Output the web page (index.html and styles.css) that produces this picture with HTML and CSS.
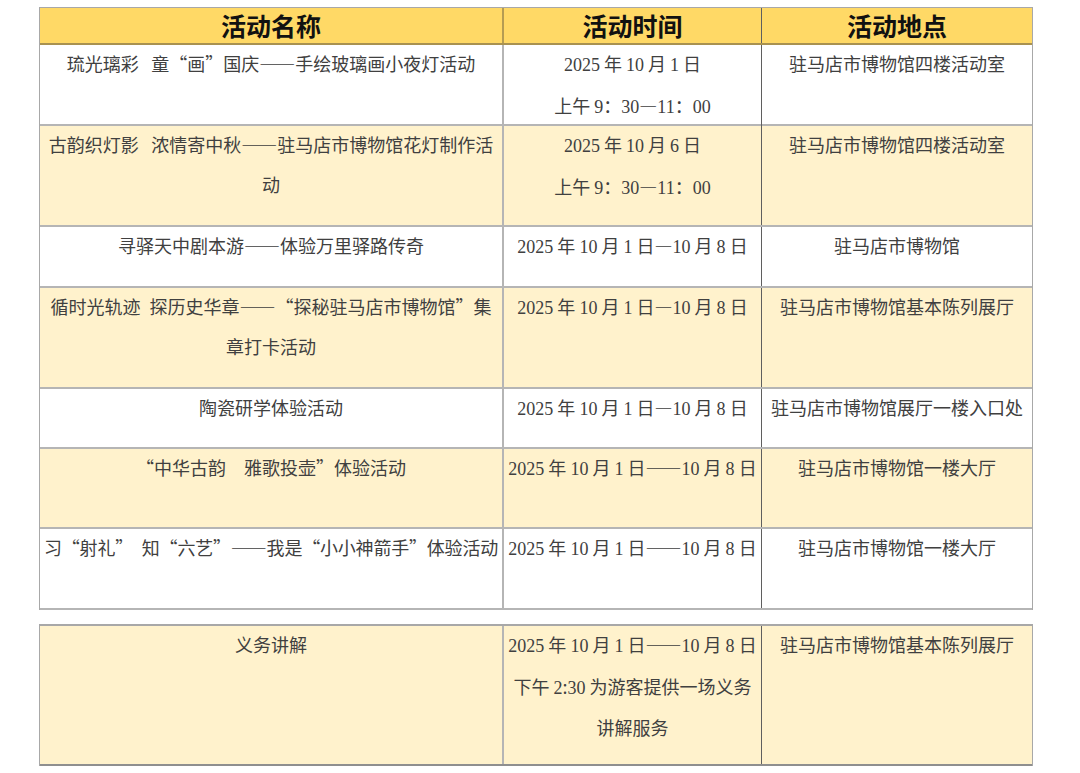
FILE: index.html
```html
<!DOCTYPE html>
<html lang="zh-CN">
<head>
<meta charset="utf-8">
<title>活动安排</title>
<link rel="stylesheet" href="styles.css">
</head>
<body>
<div class="sheet">
  <div class="table">
    <div class="row head">
      <div class="cell c1">活动名称</div>
      <div class="cell c2">活动时间</div>
      <div class="cell c3">活动地点</div>
    </div>
    <div class="row white h81">
      <div class="cell c1"><div class="t">琉光璃彩&ensp;&thinsp;童“画”国庆——手绘玻璃画小夜灯活动</div></div>
      <div class="cell c2"><div class="t"><span class="n">2025</span> 年 <span class="n">10</span> 月 <span class="n">1</span> 日<br>上午 <span class="n">9</span>：<span class="n">30</span>—<span class="n">11</span>：<span class="n">00</span></div></div>
      <div class="cell c3"><div class="t">驻马店市博物馆四楼活动室</div></div>
    </div>
    <div class="row yellow h101">
      <div class="cell c1"><div class="t">古韵织灯影&ensp;&thinsp;浓情寄中秋——驻马店市博物馆花灯制作活<br>动</div></div>
      <div class="cell c2"><div class="t"><span class="n">2025</span> 年 <span class="n">10</span> 月 <span class="n">6</span> 日<br>上午 <span class="n">9</span>：<span class="n">30</span>—<span class="n">11</span>：<span class="n">00</span></div></div>
      <div class="cell c3"><div class="t">驻马店市博物馆四楼活动室</div></div>
    </div>
    <div class="row white h61">
      <div class="cell c1"><div class="t">寻驿天中剧本游——体验万里驿路传奇</div></div>
      <div class="cell c2"><div class="t"><span class="n">2025</span> 年 <span class="n">10</span> 月 <span class="n">1</span> 日—<span class="n">10</span> 月 <span class="n">8</span> 日</div></div>
      <div class="cell c3"><div class="t">驻马店市博物馆</div></div>
    </div>
    <div class="row yellow h101">
      <div class="cell c1"><div class="t">循时光轨迹&ensp;探历史华章——“探秘驻马店市博物馆”集<br>章打卡活动</div></div>
      <div class="cell c2"><div class="t"><span class="n">2025</span> 年 <span class="n">10</span> 月 <span class="n">1</span> 日—<span class="n">10</span> 月 <span class="n">8</span> 日</div></div>
      <div class="cell c3"><div class="t">驻马店市博物馆基本陈列展厅</div></div>
    </div>
    <div class="row white h60">
      <div class="cell c1"><div class="t">陶瓷研学体验活动</div></div>
      <div class="cell c2"><div class="t"><span class="n">2025</span> 年 <span class="n">10</span> 月 <span class="n">1</span> 日—<span class="n">10</span> 月 <span class="n">8</span> 日</div></div>
      <div class="cell c3"><div class="t">驻马店市博物馆展厅一楼入口处</div></div>
    </div>
    <div class="row yellow h80">
      <div class="cell c1"><div class="t">“中华古韵&emsp;雅歌投壶”体验活动</div></div>
      <div class="cell c2"><div class="t"><span class="n">2025</span> 年 <span class="n">10</span> 月 <span class="n">1</span> 日——<span class="n">10</span> 月 <span class="n">8</span> 日</div></div>
      <div class="cell c3"><div class="t">驻马店市博物馆一楼大厅</div></div>
    </div>
    <div class="row white h81">
      <div class="cell c1"><div class="t tight">习“射礼”&ensp;知“六艺”——我是“小小神箭手”体验活动</div></div>
      <div class="cell c2"><div class="t"><span class="n">2025</span> 年 <span class="n">10</span> 月 <span class="n">1</span> 日——<span class="n">10</span> 月 <span class="n">8</span> 日</div></div>
      <div class="cell c3"><div class="t">驻马店市博物馆一楼大厅</div></div>
    </div>
  </div>

  <div class="table second">
    <div class="row yellow h140">
      <div class="cell c1"><div class="t">义务讲解</div></div>
      <div class="cell c2"><div class="t"><span class="n">2025</span> 年 <span class="n">10</span> 月 <span class="n">1</span> 日——<span class="n">10</span> 月 <span class="n">8</span> 日<br>下午 <span class="n">2</span>:<span class="n">30</span> 为游客提供一场义务<br>讲解服务</div></div>
      <div class="cell c3"><div class="t">驻马店市博物馆基本陈列展厅</div></div>
    </div>
  </div>
</div>
</body>
</html>
```

FILE: styles.css
```css
* {
  box-sizing: border-box;
}

html, body {
  margin: 0;
  padding: 0;
  background: #ffffff;
}

body {
  font-family: "Noto Sans CJK SC", "Noto Sans", sans-serif;
  color: #404040;
}

.sheet {
  padding: 7px 0 0 39px;
  width: 1033px;
}

.table {
  width: 994px;
  border-top: 1px solid #a8a8a8;
  border-left: 1px solid #a8a8a8;
  border-right: 1px solid #a8a8a8;
}

.second {
  margin-top: 14px;
  border-top: 2px solid #a8a8a8;
}

.row {
  display: grid;
  grid-template-columns: 464px 258px 1fr;
  border-bottom: 2px solid #b5b5b5;
}

.second .row {
  border-bottom-color: #8f8f8f;
}

.cell {
  text-align: center;
  font-size: 18px;
  line-height: 39.5px;
  padding: 0 3px;
  white-space: nowrap;
}

.t {
  margin-top: -1px;
}

.tight {
  letter-spacing: -0.2px;
}

.c1 {
  border-right: 2px solid #b5b5b5;
}

.c2 {
  border-right: 1px solid #5f5f5f;
}

.n {
  font-family: "Liberation Serif", serif;
  font-size: 18px;
}

.white {
  background: #ffffff;
}

.yellow {
  background: #fff2cc;
}

.head {
  background: #ffd966;
  height: 37px;
  border-bottom: 2px solid #a99250;
}

.head .cell {
  display: flex;
  align-items: center;
  justify-content: center;
  font-size: 25px;
  font-weight: 700;
  color: #111111;
  line-height: 1;
}

.head .c1 {
  border-right-color: #b59c52;
}

.h60 { height: 60px; }
.h61 { height: 61px; }
.h80 { height: 80px; }
.h81 { height: 81px; }
.h101 { height: 101px; }
.h140 { height: 140px; }
```
